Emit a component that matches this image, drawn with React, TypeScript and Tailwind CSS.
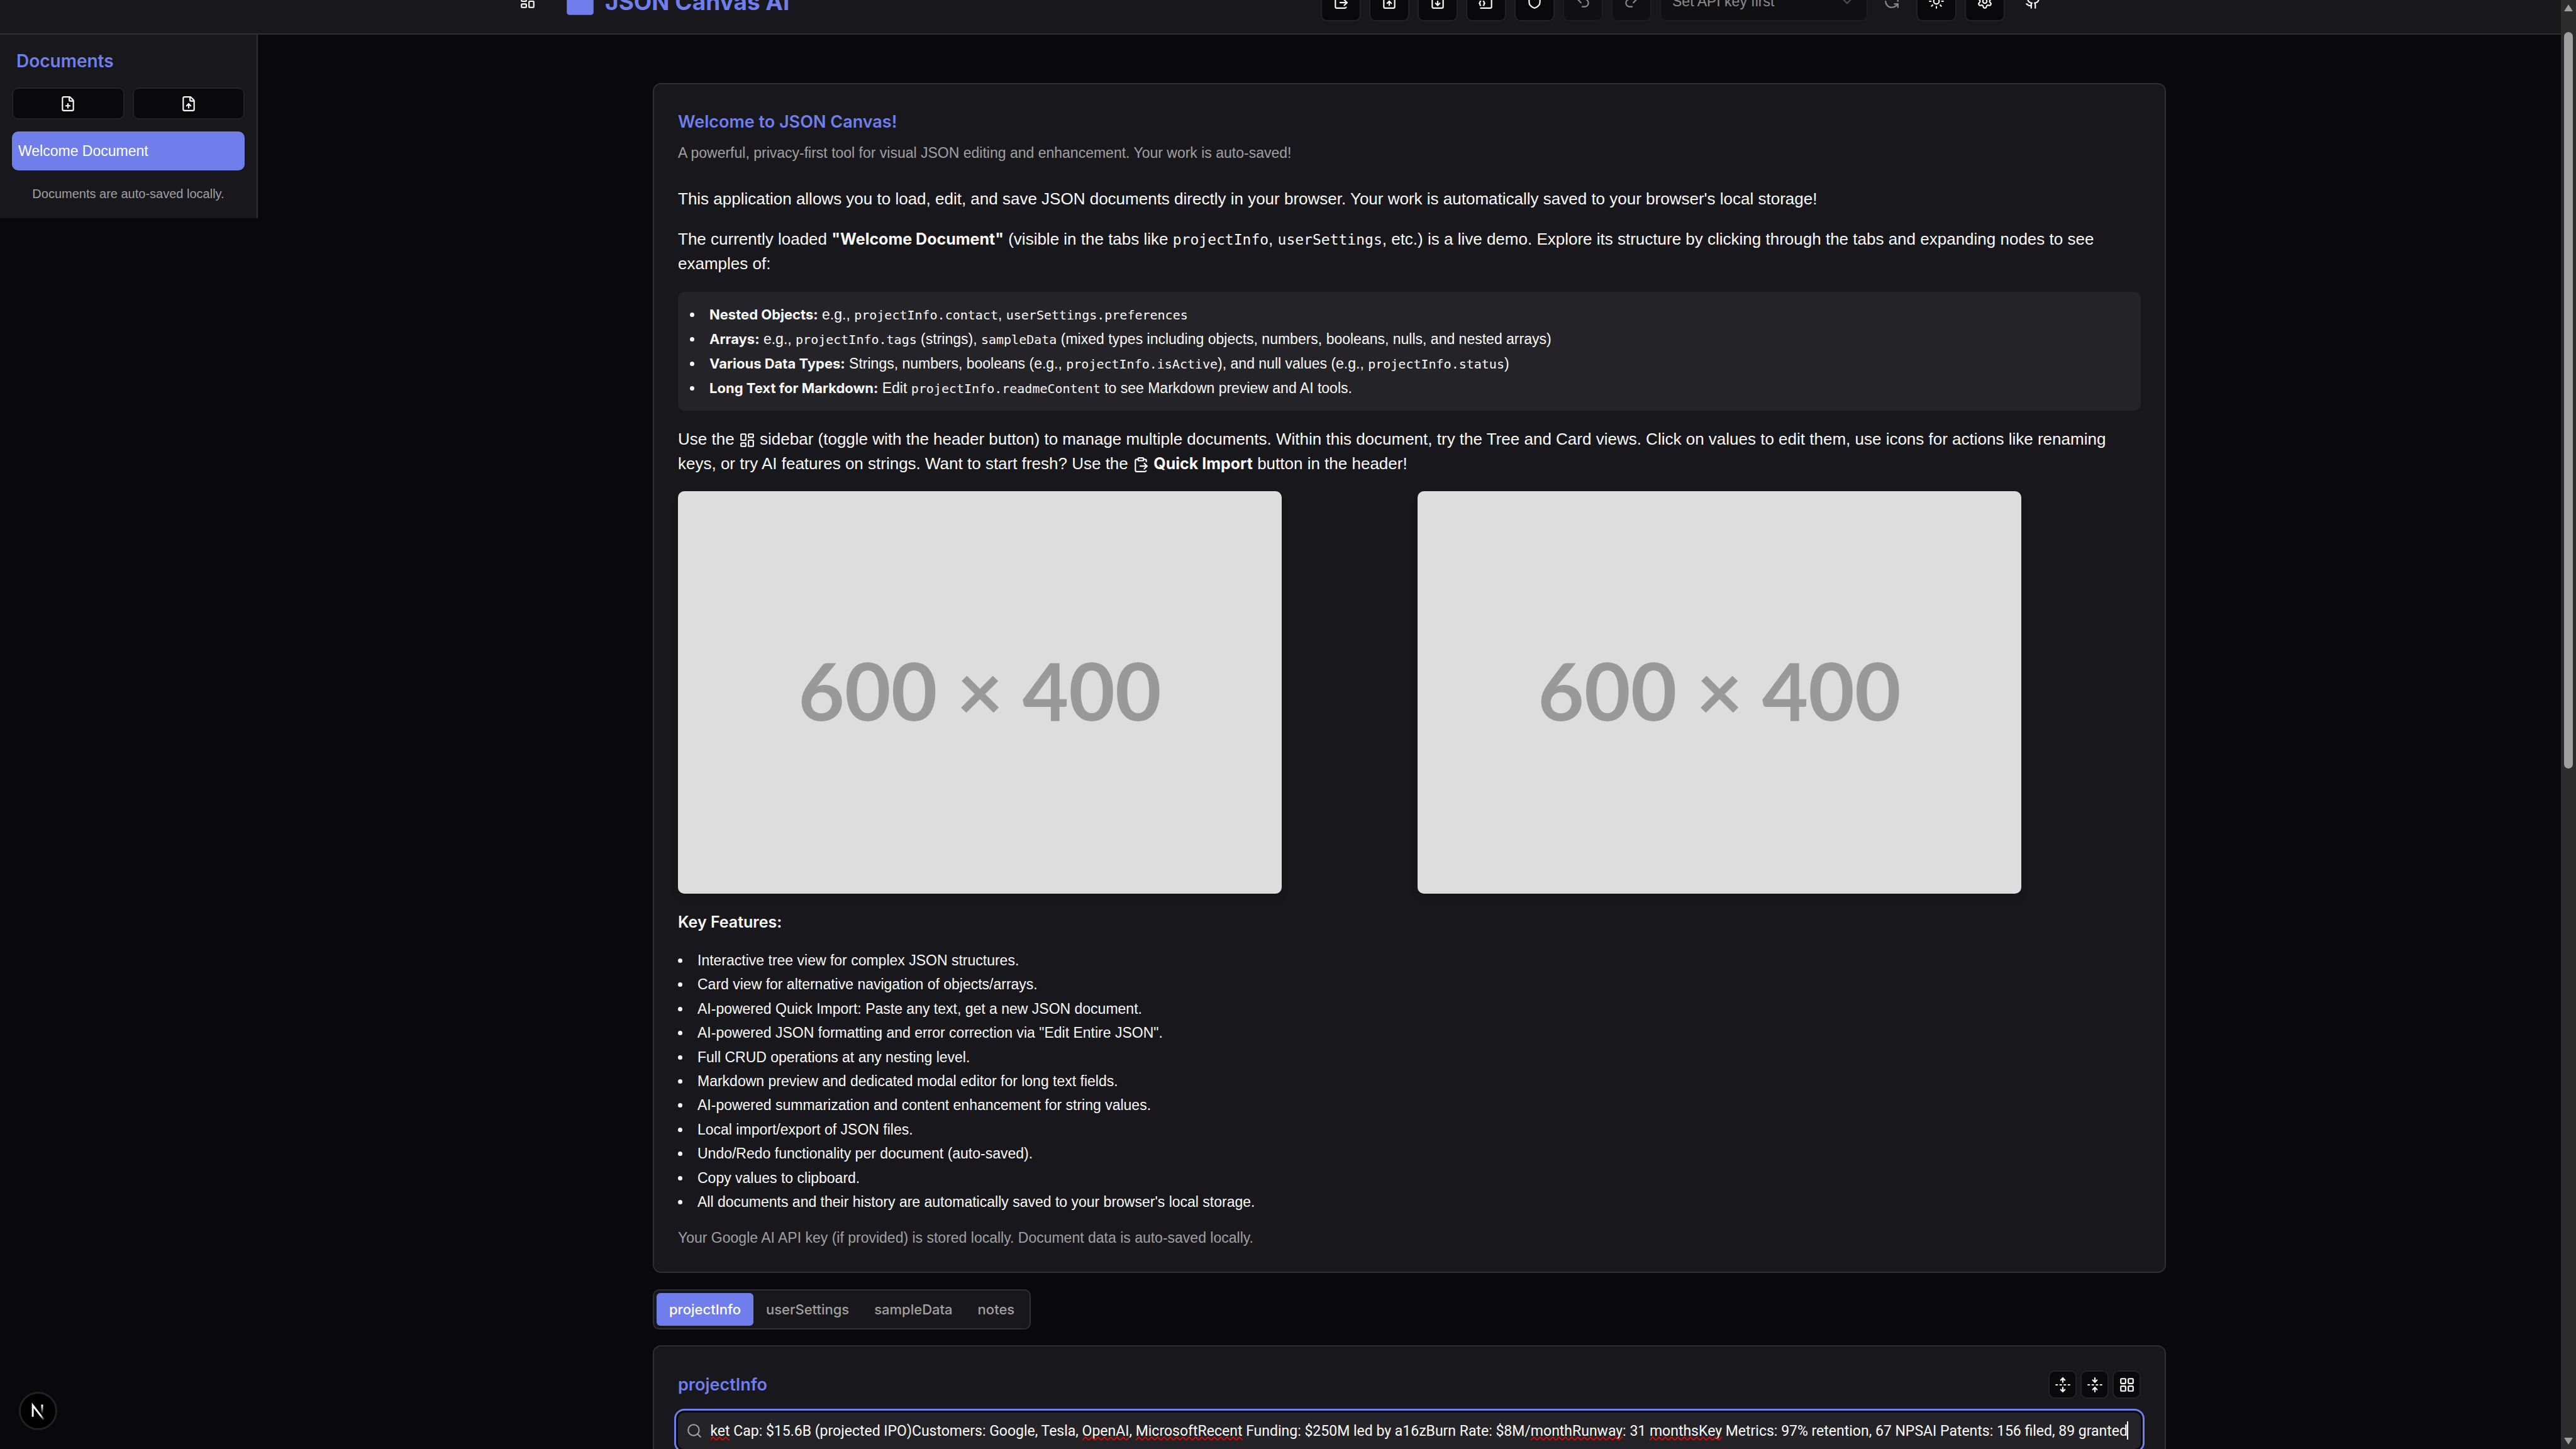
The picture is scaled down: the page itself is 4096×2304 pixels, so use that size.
import { useEffect, useLayoutEffect, useRef, useState } from "react";
import type { ReactNode } from "react";
import {
  ChevronDown,
  ClipboardPaste,
  FileDown,
  FilePlus,
  FileUp,
  FoldVertical,
  Github,
  LayoutDashboard,
  LayoutGrid,
  Redo2,
  RefreshCcw,
  Search,
  Settings,
  Shield,
  Sun,
  Undo2,
  UnfoldVertical,
} from "lucide-react";

const ICON = "size-[26px] shrink-0";

const FEATURES = [
  "Interactive tree view for complex JSON structures.",
  "Card view for alternative navigation of objects/arrays.",
  "AI-powered Quick Import: Paste any text, get a new JSON document.",
  'AI-powered JSON formatting and error correction via "Edit Entire JSON".',
  "Full CRUD operations at any nesting level.",
  "Markdown preview and dedicated modal editor for long text fields.",
  "AI-powered summarization and content enhancement for string values.",
  "Local import/export of JSON files.",
  "Undo/Redo functionality per document (auto-saved).",
  "Copy values to clipboard.",
  "All documents and their history are automatically saved to your browser's local storage.",
];

const TABS = ["projectInfo", "userSettings", "sampleData", "notes"];

const QUERY =
  "Market Cap: $15.6B (projected IPO)Customers: Google, Tesla, OpenAI, MicrosoftRecent Funding: $250M led by a16zBurn Rate: $8M/monthRunway: 31 monthsKey Metrics: 97% retention, 67 NPSAI Patents: 156 filed, 89 granted";

const MISSPELLED = ["Market", "OpenAI", "MicrosoftRecent", "monthRunway", "monthsKey"];

function FileJsonIcon() {
  return (
    <svg viewBox="0 0 24 24" fill="none" stroke="currentColor" strokeWidth="2" strokeLinecap="round" strokeLinejoin="round" className={ICON}>
      <path d="M4 22h14a2 2 0 0 0 2-2V7l-5-5H6a2 2 0 0 0-2 2v4" />
      <path d="M14 2v4a2 2 0 0 0 2 2h4" />
      <path d="M4 12a1 1 0 0 0-1 1v1a1 1 0 0 1-1 1 1 1 0 0 1 1 1v1a1 1 0 0 0 1 1" />
      <path d="M8 18a1 1 0 0 0 1-1v-1a1 1 0 0 1 1-1 1 1 0 0 1-1-1v-1a1 1 0 0 0-1-1" />
    </svg>
  );
}

function HeaderButton({ label, disabled, children }: { label: string; disabled?: boolean; children: ReactNode }) {
  return (
    <button
      type="button"
      aria-label={label}
      disabled={disabled}
      className="flex size-16 shrink-0 items-center justify-center rounded-[10px] border-2 border-[#232326] bg-[#09090b] disabled:opacity-50"
    >
      {children}
    </button>
  );
}

function Header() {
  return (
    <header className="flex h-[55px] shrink-0 flex-col justify-end overflow-hidden border-b-2 border-[#2e2e33] bg-[#18181c]">
      <div className="mx-auto mb-[19px] flex h-16 w-full max-w-[2458px] shrink-0 items-center justify-between">
        <div className="flex items-center">
          <button type="button" aria-label="Toggle sidebar" className="flex size-16 items-center justify-center">
            <LayoutDashboard className={ICON} />
          </button>
          <svg viewBox="0 0 24 24" className="ml-[26px] size-[51px]" aria-hidden="true">
            <rect x="2" y="2" width="20" height="20" rx="2" fill="#6f7eeb" />
          </svg>
          <h1 className="ml-[14px] font-['Inter',sans-serif] text-[37px] leading-[51px] font-bold text-[#6f7eeb]">JSON Canvas AI</h1>
        </div>
        <div className="flex items-center gap-[13px]">
          <HeaderButton label="Quick import"><ClipboardPaste className={ICON} /></HeaderButton>
          <HeaderButton label="Import file"><FileUp className={ICON} /></HeaderButton>
          <HeaderButton label="Export file"><FileDown className={ICON} /></HeaderButton>
          <HeaderButton label="Edit entire JSON"><FileJsonIcon /></HeaderButton>
          <HeaderButton label="API key"><Shield className={ICON} /></HeaderButton>
          <HeaderButton label="Undo" disabled><Undo2 className={ICON} /></HeaderButton>
          <HeaderButton label="Redo" disabled><Redo2 className={ICON} /></HeaderButton>
          <div className="flex items-center gap-3">
            <div className="relative opacity-50">
              <select
                aria-label="Model"
                disabled
                className="h-16 w-[331px] appearance-none rounded-[10px] border-2 border-[#232326] bg-[#09090b] pr-12 pl-[18px] text-[23px] text-[#fafafa] opacity-100"
              >
                <option>Set API key first</option>
              </select>
              <ChevronDown className="pointer-events-none absolute top-[19px] right-[20px] size-[26px] opacity-50" />
            </div>
            <button type="button" aria-label="Refresh models" disabled className="flex h-16 w-[52px] items-center justify-center opacity-50">
              <RefreshCcw className={ICON} />
            </button>
          </div>
          <HeaderButton label="Theme"><Sun className={ICON} /></HeaderButton>
          <HeaderButton label="Settings"><Settings className={ICON} /></HeaderButton>
          <a href="#github" aria-label="GitHub" className="flex size-16 items-center justify-center">
            <Github className={ICON} />
          </a>
        </div>
      </div>
    </header>
  );
}

function Sidebar() {
  return (
    <aside className="w-[410px] shrink-0 border-r-2 border-[#2e2e33] bg-[#18181c] px-[19px] pt-5 pb-[26px]">
      <h2 className="px-[7px] font-['Inter',sans-serif] text-[28px] leading-[45px] font-semibold text-[#6f7eeb]">Documents</h2>
      <div className="mt-[19px] grid grid-cols-2 gap-[13px]">
        <button type="button" aria-label="New document" className="flex h-[51px] items-center justify-center rounded-[10px] border-2 border-[#232326] bg-[#09090b]">
          <FilePlus className={ICON} />
        </button>
        <button type="button" aria-label="Import document" className="flex h-[51px] items-center justify-center rounded-[10px] border-2 border-[#232326] bg-[#09090b]">
          <FileUp className={ICON} />
        </button>
      </div>
      <button type="button" className="mt-[19px] block h-[62px] w-full rounded-[10px] bg-[#6f7eeb] px-[10px] text-left text-[23px] text-white">
        Welcome Document
      </button>
      <p className="mt-6 text-center text-[20px] leading-[26px] text-[#a0a0a0]">Documents are auto-saved locally.</p>
    </aside>
  );
}

function Code({ children }: { children: ReactNode }) {
  return <code className="font-['DejaVu_Sans_Mono',monospace] text-[23px] leading-none">{children}</code>;
}

function SmallCode({ children }: { children: ReactNode }) {
  return <code className="font-['DejaVu_Sans_Mono',monospace] text-[20px] leading-none">{children}</code>;
}

function Strong({ children }: { children: ReactNode }) {
  return <strong className="font-['Inter',sans-serif] text-[25px] leading-none font-bold">{children}</strong>;
}

function SmallStrong({ children }: { children: ReactNode }) {
  return <strong className="font-['Inter',sans-serif] text-[22px] leading-none font-bold">{children}</strong>;
}

function Placeholder() {
  return (
    <div
      role="img"
      aria-label="Placeholder"
      className="flex aspect-[3/2] w-full max-w-[960px] items-center justify-center rounded-[10px] bg-[#dddddd] pb-2 font-['Lato',sans-serif] text-[127px] leading-none font-bold text-[#999999] shadow-lg"
    >
      600 × 400
    </div>
  );
}

function WelcomeCard() {
  return (
    <section className="rounded-[13px] border-2 border-[#2e2e33] bg-[#18181c] px-[38px] pt-10 pb-[38px]">
      <h2 className="font-['Inter',sans-serif] text-[27px] leading-[40px] font-semibold text-[#6f7eeb]">Welcome to JSON Canvas!</h2>
      <p className="mt-[13px] text-[23px] leading-[32px] text-[#a0a0a0]">
        A powerful, privacy-first tool for visual JSON editing and enhancement. Your work is auto-saved!
      </p>
      <div className="mt-[38px] text-[26px] leading-[39px]">
        <p>
          This application allows you to load, edit, and save JSON documents directly in your browser. Your work is
          automatically saved to your browser's local storage!
        </p>
        <p className="mt-[25px]">
          The currently loaded <Strong>"Welcome Document"</Strong> (visible in the tabs like <Code>projectInfo</Code>,{" "}
          <Code>userSettings</Code>, etc.) is a live demo. Explore its structure by clicking through the tabs and
          expanding nodes to see examples of:
        </p>
        <ul className="mt-[25px] list-inside list-disc rounded-[10px] bg-[#242428] pt-[17px] pr-4 pb-4 pl-[19px] text-[23px] leading-[39px]">
          <li>
            <SmallStrong>Nested Objects:</SmallStrong> e.g., <SmallCode>projectInfo.contact</SmallCode>,{" "}
            <SmallCode>userSettings.preferences</SmallCode>
          </li>
          <li>
            <SmallStrong>Arrays:</SmallStrong> e.g., <SmallCode>projectInfo.tags</SmallCode> (strings),{" "}
            <SmallCode>sampleData</SmallCode> (mixed types including objects, numbers, booleans, nulls, and nested arrays)
          </li>
          <li>
            <SmallStrong>Various Data Types:</SmallStrong> Strings, numbers, booleans (e.g.,{" "}
            <SmallCode>projectInfo.isActive</SmallCode>), and null values (e.g., <SmallCode>projectInfo.status</SmallCode>)
          </li>
          <li>
            <SmallStrong>Long Text for Markdown:</SmallStrong> Edit <SmallCode>projectInfo.readmeContent</SmallCode> to see
            Markdown preview and AI tools.
          </li>
        </ul>
        <p className="mt-[26px]">
          Use the <LayoutDashboard className="inline size-[26px] align-middle" /> sidebar (toggle with the header button)
          to manage multiple documents. Within this document, try the Tree and Card views. Click on values to edit them,
          use icons for actions like renaming keys, or try AI features on strings. Want to start fresh? Use the{" "}
          <ClipboardPaste className="inline size-[26px] align-middle" /> <Strong>Quick Import</Strong> button in the
          header!
        </p>
      </div>
      <div className="mt-6 grid grid-cols-2 gap-[26px]">
        <Placeholder />
        <Placeholder />
      </div>
      <h3 className="mt-[26px] font-['Inter',sans-serif] text-[25px] leading-[39px] font-semibold">Key Features:</h3>
      <ul className="mt-[22px] list-inside list-disc text-[23px] leading-[1.67]">
        {FEATURES.map((f) => (
          <li key={f}>{f}</li>
        ))}
      </ul>
      <p className="mt-[22px] text-[23px] leading-[32px] text-[#a0a0a0]">
        Your Google AI API key (if provided) is stored locally. Document data is auto-saved locally.
      </p>
    </section>
  );
}

function SearchField() {
  const input = useRef<HTMLInputElement>(null);
  const [marks, setMarks] = useState<{ word: string; right: number; width: number }[]>([]);

  useLayoutEffect(() => {
    const el = input.current;
    if (!el) return;
    const ctx = document.createElement("canvas").getContext("2d");
    if (!ctx) return;
    const style = getComputedStyle(el);
    ctx.font = `${style.fontWeight} ${style.fontSize} ${style.fontFamily}`;
    setMarks(
      MISSPELLED.map((word) => ({
        word,
        right: ctx.measureText(QUERY.slice(QUERY.indexOf(word) + word.length)).width,
        width: ctx.measureText(word).width,
      })),
    );
  }, []);

  useEffect(() => {
    const el = input.current;
    if (el) el.scrollLeft = el.scrollWidth;
  }, []);

  return (
    <div className="relative mt-[22px] h-[58px] rounded-[10px] bg-[#242428] pr-[21px] pl-[52px] ring-3 ring-[#6f7eeb] ring-offset-3 ring-offset-[#09090b]">
      <Search className="absolute top-4 left-[13px] size-[26px] text-[#a0a0a0]" />
      <input
        ref={input}
        type="text"
        aria-label="Search"
        spellCheck={false}
        defaultValue={QUERY}
        className="block h-full w-full bg-transparent font-['Roboto',sans-serif] text-[23px] text-[#fafafa] outline-none"
      />
      <div className="pointer-events-none absolute top-[38px] right-[21px] left-[52px] h-[7px] overflow-hidden">
        {marks.map((m) => (
          <svg key={m.word} className="absolute top-0 h-[7px]" style={{ right: m.right, width: m.width }}>
            <defs>
              <pattern id={`wave-${m.word}`} width="10" height="7" patternUnits="userSpaceOnUse">
                <path d="M0 6 L5 1 L10 6" fill="none" stroke="#ff0000" strokeWidth="1.5" />
              </pattern>
            </defs>
            <rect width="100%" height="7" fill={`url(#wave-${m.word})`} />
          </svg>
        ))}
      </div>
      <div className="pointer-events-none absolute top-[14px] right-[20px] h-[29px] w-[2px] bg-white" />
    </div>
  );
}

function SmallButton({ label, children }: { label: string; children: ReactNode }) {
  return (
    <button type="button" aria-label={label} className="flex size-[45px] items-center justify-center rounded-[10px] border-2 border-[#232326] bg-[#09090b]">
      {children}
    </button>
  );
}

function Scrollbar() {
  return (
    <div className="flex w-6 shrink-0 flex-col items-center justify-between bg-[#2c2c2c] py-[7px]" aria-hidden="true">
      <svg viewBox="0 0 14 12" className="h-3 w-[14px]">
        <path d="M7 0 L14 11 L0 11 Z" fill="#9f9f9f" />
      </svg>
      <div className="mt-8 w-[14px] flex-[1170] rounded-full bg-[#9f9f9f]" />
      <div className="flex-[1062]" />
      <svg viewBox="0 0 14 12" className="h-3 w-[14px]">
        <path d="M0 1 L14 1 L7 12 Z" fill="#9f9f9f" />
      </svg>
    </div>
  );
}

function NextBadge() {
  return (
    <button
      type="button"
      aria-label="Open developer tools"
      className="fixed bottom-[30px] left-[30px] flex size-[61px] items-center justify-center rounded-full border-3 border-[#222222] bg-black"
    >
      <svg viewBox="1 0 14 14" fill="none" className="size-[22px] overflow-visible">
        <path d="M13.3 15.2 L2.34 1 V12.6" stroke="url(#next-diagonal)" strokeWidth="1.86" />
        <path d="M11.825 0.2 V13.1" stroke="url(#next-bar)" strokeWidth="1.86" />
        <defs>
          <linearGradient id="next-diagonal" x1="9.95" y1="11.1" x2="14.2" y2="16.4" gradientUnits="userSpaceOnUse">
            <stop stopColor="white" />
            <stop offset="1" stopColor="white" stopOpacity="0" />
          </linearGradient>
          <linearGradient id="next-bar" x1="11.8" y1="1.4" x2="11.79" y2="9.6" gradientUnits="userSpaceOnUse">
            <stop stopColor="white" />
            <stop offset="1" stopColor="white" stopOpacity="0" />
          </linearGradient>
        </defs>
      </svg>
    </button>
  );
}

export default function App() {
  return (
    <div className="flex h-screen overflow-hidden bg-[#09090b] font-['Liberation_Sans',sans-serif] text-[#fafafa]">
      <div className="flex min-w-0 flex-1 flex-col overflow-hidden">
        <Header />
        <div className="flex items-start">
          <Sidebar />
          <main className="min-w-0 flex-1 pt-[77px]">
            <div className="mx-auto w-full max-w-[2406px]">
              <WelcomeCard />
              <div role="tablist" className="mt-[26px] flex w-fit rounded-[10px] border-2 border-[#2e2e33] bg-[#18181c] p-1">
                {TABS.map((t, i) => (
                  <button
                    key={t}
                    type="button"
                    role="tab"
                    aria-selected={i === 0}
                    className="h-[52px] rounded-[6px] px-5 font-['Inter',sans-serif] text-[22px] font-medium text-[#a0a0a0] aria-selected:bg-[#6f7eeb] aria-selected:text-white"
                  >
                    {t}
                  </button>
                ))}
              </div>
              <section className="mt-[25px] rounded-[13px] border-2 border-[#2e2e33] bg-[#18181c] px-[38px] pt-[38px] pb-10">
                <div className="flex items-center justify-between">
                  <h2 className="font-['Inter',sans-serif] text-[27px] leading-[40px] font-semibold text-[#6f7eeb]">projectInfo</h2>
                  <div className="flex gap-[6px]">
                    <SmallButton label="Expand all"><UnfoldVertical className={ICON} /></SmallButton>
                    <SmallButton label="Collapse all"><FoldVertical className={ICON} /></SmallButton>
                    <SmallButton label="Card view"><LayoutGrid className={ICON} /></SmallButton>
                  </div>
                </div>
                <SearchField />
              </section>
            </div>
          </main>
        </div>
      </div>
      <Scrollbar />
      <NextBadge />
    </div>
  );
}
